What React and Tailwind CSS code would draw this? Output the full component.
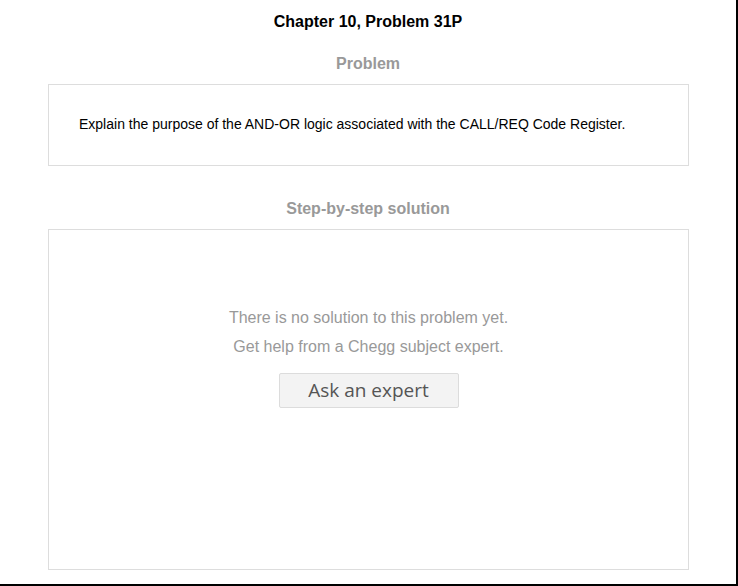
export default function App() {
  return (
    <div className="w-[738px] h-[586px] bg-white border-r-2 border-b-2 border-black box-border overflow-hidden" style={{ fontFamily: '"Liberation Sans", Arial, sans-serif' }}>
      <div className="pt-[13px] text-center text-[16px] leading-[18px] font-bold text-black">Chapter 10, Problem 31P</div>
      <div className="mt-[24px] text-center text-[16px] leading-[18px] font-bold text-[#999]">Problem</div>
      <div className="ml-[48px] mr-[47px] mt-[11px] h-[82px] border border-[#dddddd] pl-[30px] pt-[30px]">
        <p className="text-[14px] leading-[18px] text-black">Explain the purpose of the AND-OR logic associated with the CALL/REQ Code Register.</p>
      </div>
      <div className="mt-[34px] text-center text-[16px] leading-[18px] font-bold text-[#999]">Step-by-step solution</div>
      <div className="ml-[48px] mr-[47px] mt-[11px] h-[341px] border border-[#dddddd] flex flex-col items-center pt-[78px]">
        <p className="text-[16px] leading-[20px] text-[#999]">There is no solution to this problem yet.</p>
        <p className="mt-[9px] text-[16px] leading-[20px] text-[#999]">Get help from a Chegg subject expert.</p>
        <button className="mt-[16px] w-[180px] h-[35px] bg-[#f3f3f3] border border-[#dcdcdc] rounded-[2px] text-[19px] text-[#555] flex items-center justify-center" style={{ fontFamily: '"Open Sans", "DejaVu Sans", sans-serif' }}>Ask an expert</button>
      </div>
    </div>
  );
}
